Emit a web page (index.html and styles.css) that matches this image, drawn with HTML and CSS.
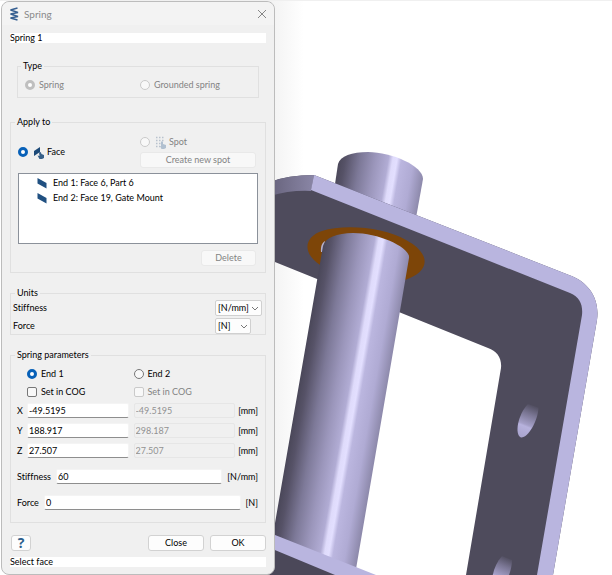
FILE: index.html
```html
<!DOCTYPE html>
<html lang="en">
<head>
<meta charset="utf-8">
<title>Spring</title>
<link rel="stylesheet" href="styles.css">
</head>
<body>
<main class="workspace">
  <svg class="scene" viewBox="0 0 612 575" preserveAspectRatio="xMinYMin slice" aria-hidden="true">
    <defs>
      <linearGradient id="steel" gradientUnits="userSpaceOnUse" x1="366" y1="0" x2="451" y2="14.7">
        <stop offset="0" stop-color="#4b485a"/>
        <stop offset=".08" stop-color="#565267"/>
        <stop offset=".25" stop-color="#7d7998"/>
        <stop offset=".42" stop-color="#9b96bb"/>
        <stop offset=".57" stop-color="#b1acd4"/>
        <stop offset=".62" stop-color="#dfdbfb"/>
        <stop offset=".67" stop-color="#e3dfff"/>
        <stop offset=".72" stop-color="#bbb6df"/>
        <stop offset=".86" stop-color="#b0abd4"/>
        <stop offset="1" stop-color="#8e8aac"/>
      </linearGradient>
      <linearGradient id="bevel"><stop offset="0" stop-color="#67637c"/><stop offset="1" stop-color="#8a86a6"/></linearGradient>
      <linearGradient id="bore" x1=".6" y1="0" x2=".35" y2="1">
        <stop offset="0" stop-color="#504d5f"/><stop offset=".3" stop-color="#7b7795"/><stop offset=".62" stop-color="#a49fc7"/><stop offset=".68" stop-color="#b7b2dd"/><stop offset="1" stop-color="#aaa5cf"/>
      </linearGradient>
      <linearGradient id="shade"><stop offset="0" stop-color="#f2f2f2"/><stop offset="1" stop-color="#ffffff"/></linearGradient>
    </defs>
    <rect width="612" height="575" fill="#fff"/>
    <rect x="270" width="34" height="575" fill="url(#shade)"/>
    <rect width="612" height="1" fill="#f0f0f0"/>
    <path d="M335 184 338 164C340 156 352 152 368 152 392 152 423 166 423 179L416 218Z" fill="url(#steel)"/>
    <path d="M270 182Q288 175 314 175L569 275C589 282 600 299 597 320L553 575H466L501 368C502 358 497 351 488 348L270 260Z" fill="#4e4b5c"/>
    <path d="M270 182Q288 175 314 175L311 191Q290 190 270 196Z" fill="url(#bevel)"/>
    <path d="M314 175 569 275C589 282 600 299 597 320L553 575H537L582 315C583 305 580 297 570 293L311 190Z" fill="#b9b5df"/>
    <path d="M528 404 538.500 407.500C538 421 528 438 521 437.500 514 435 518 414 528 404Z" fill="url(#bore)"/>
    <path d="M502 556 512 560C512 573 504 589 496 589 489 587 492 567 502 556Z" fill="url(#bore)"/>
    <path d="M320 265C302 253 304 237 322 231 344 224 384 227 406 240 432 254 430 272 405 280Z" fill="#7d4508"/>
    <path d="M321 252C320.500 246 322 243 325 241L323 252Z" fill="#b5b1cf"/>
    <path d="M266 575 323 246C325 238 337 233 353 233 380 233 411 248 409 258L355 575Z" fill="url(#steel)"/>
    <path d="M270 533 376 575H270Z" fill="#b9b5df"/>
    <path d="M270 548 335 575H270Z" fill="#4b4859"/>
  </svg>

  <form class="dialog" aria-label="Spring">
    <header class="titlebar">
      <svg class="logo" viewBox="0 0 10 14"><path d="M8.500 1 1.500 3 9 5.500 1.500 7 9 9.500 1.500 11 8.500 13" fill="none" stroke="#365f91" stroke-width="1.500" stroke-linejoin="bevel"/></svg>
      <h1>Spring</h1>
      <button type="button" class="close" aria-label="Close window"><svg viewBox="0 0 10 10"><path d="M1 1 9 9M9 1 1 9" stroke="#868686" fill="none"/></svg></button>
    </header>

    <input class="strip name" aria-label="Name" value="Spring 1">

    <fieldset class="type">
      <legend>Type</legend>
      <label class="off"><input type="radio" name="type" checked disabled>Spring</label>
      <label class="off"><input type="radio" name="type" disabled>Grounded spring</label>
    </fieldset>

    <fieldset class="apply">
      <legend>Apply to</legend>
      <div class="targets">
        <label><input type="radio" name="target" checked>
          <svg class="pick" viewBox="0 0 12 13"><path d="M1 5 7 1V6L1 10Z" fill="#1d4a78"/><path d="M6 6.500Q8 5 8.500 8L11 9V12L9 13H6.500L4.500 9.500 6.500 10Z" fill="#365f88"/></svg>Face</label>
        <div class="spot">
          <label class="off"><input type="radio" name="target" disabled>
            <svg class="pick" viewBox="0 0 12 13"><path d="M1 1.500H9M1 4.500H9M1 7.500H6M1 10.500H5" stroke="#b9c2cd" stroke-width="1.500" stroke-dasharray="1.500 1.500"/><path d="M6 5.500H8V8L11 9V12L9 13H6.500L5 10H6Z" fill="#b1c0d0"/></svg>Spot</label>
          <button type="button" disabled>Create new spot</button>
        </div>
      </div>
      <ul class="list">
        <li><svg viewBox="0 0 10 12"><path d="M.5 1 9.500 6V11.500L.5 6.500Z" fill="#205081"/></svg>End 1: Face 6, Part 6</li>
        <li><svg viewBox="0 0 10 12"><path d="M.5 1 9.500 6V11.500L.5 6.500Z" fill="#205081"/></svg>End 2: Face 19, Gate Mount</li>
      </ul>
      <button type="button" class="delete" disabled>Delete</button>
    </fieldset>

    <fieldset class="units">
      <legend>Units</legend>
      <label for="us">Stiffness</label>
      <select id="us"><option>[N/mm]</option></select>
      <label for="uf">Force</label>
      <select id="uf" class="short"><option>[N]</option></select>
    </fieldset>

    <fieldset class="params">
      <legend>Spring parameters</legend>
      <div class="ends">
        <label class="first"><input type="radio" name="end" checked>End 1</label>
        <label><input type="radio" name="end">End 2</label>
        <label class="first"><input type="checkbox">Set in COG</label>
        <label class="off"><input type="checkbox" disabled>Set in COG</label>
      </div>
      <div class="coords">
        <label for="x">X</label><input id="x" value="-49.5195"><input aria-label="X, end 2" value="-49.5195" disabled><span>[mm]</span>
        <label for="y">Y</label><input id="y" value="188.917"><input aria-label="Y, end 2" value="298.187" disabled><span>[mm]</span>
        <label for="z">Z</label><input id="z" value="27.507"><input aria-label="Z, end 2" value="27.507" disabled><span>[mm]</span>
      </div>
      <div class="line"><label for="st">Stiffness</label><input id="st" value="60"><span>[N/mm]</span></div>
      <div class="line"><label for="fo">Force</label><input id="fo" value="0"><span>[N]</span></div>
    </fieldset>

    <footer class="actions">
      <button type="button" class="help">?</button>
      <button type="button">Close</button>
      <button type="submit">OK</button>
    </footer>
    <output class="strip status">Select face</output>
  </form>
</main>
</body>
</html>
```
FILE: styles.css
```css
* { box-sizing: border-box; }

body {
  margin: 0;
  background: #fff;
  color: #000;
  font: 9px/12px Lato, "Open Sans", sans-serif;
  font-variant-ligatures: none;
}

.workspace {
  display: grid;
  min-height: 100vh;
  overflow: hidden;
}

.scene, .dialog { grid-area: 1 / 1; }
.scene { width: 100%; height: 100%; display: block; }

.dialog {
  position: relative;
  display: flex;
  flex-direction: column;
  width: 274px;
  margin: 1px 0 0 1px;
  padding: 0 8px;
  background: #f0f0f0;
  border: 1px solid #bcbcbc;
  border-radius: 8px;
}

button, input, select { font: inherit; color: inherit; margin: 0; }

.titlebar {
  display: flex;
  align-items: center;
  height: 23px;
  margin: 0 -8px;
  padding: 0 6px 0 7px;
  background: #f3f3f3;
  border-radius: 8px 8px 0 0;
}
.titlebar h1 {
  flex: 1;
  margin: 0 0 0 5px;
  color: #8a8a8a;
  font-size: 10px;
  font-weight: 400;
}
.logo { width: 10px; height: 14px; }
.close { border: 0; padding: 0; background: none; width: 12px; height: 12px; }
.close svg { display: block; width: 10px; height: 10px; margin: 1px; }

.strip {
  display: block;
  width: 100%;
  height: 10px;
  padding: 0;
  border: 0;
  background: #fff;
  line-height: 10px;
}
.name { margin-top: 8px; }
.status { margin-top: 6px; }

fieldset {
  margin: 14px 0 0;
  padding: 0;
  min-width: 0;
  border: 1px solid #e0e0e0;
}
legend { padding: 0 2px; height: 12px; }

label { display: flex; align-items: center; }
.off { color: #838383; }

input[type="radio"], input[type="checkbox"] {
  appearance: none;
  flex: none;
  width: 10px;
  height: 10px;
  margin-right: 4px;
  border: 1px solid #777;
  border-radius: 50%;
  background: #f8f8f8;
}
input[type="checkbox"] { border-radius: 2px; }
input[type="radio"]:checked { border: 3px solid #0861b8; background: #fff; }
input:disabled[type="radio"], input:disabled[type="checkbox"] { border-color: #cacaca; }
input[type="radio"]:checked:disabled { border-color: #bfbfbf; }

.type {
  display: grid;
  grid-template-columns: 115px 1fr;
  margin: 17px 7px 4px;
  padding: 6px 7px 5px;
}
.type legend { margin-left: -4px; }
.type label { height: 14px; }

.apply { padding: 8px 7px 6px; }
.apply legend { margin-left: -3px; }
.targets { display: grid; grid-template-columns: 122px 1fr; align-items: center; }
.targets label { height: 12px; }
.spot { display: grid; gap: 4px; margin-right: 2px; }
.pick { width: 12px; height: 13px; margin: 0 1px; }
.targets .pick { margin-right: 2px; }

button {
  height: 16px;
  padding: 0;
  border: 1px solid #d2d2d2;
  border-radius: 3px;
  background: #fdfdfd;
}
button:disabled { background: #f8f8f8; border-color: #e9e9e9; color: #838383; }

.list {
  height: 71px;
  margin: 5px 0 6px;
  padding: 1px 18px;
  list-style: none;
  background: #fff;
  border: 1px solid #8b919a;
}
.list li { display: flex; align-items: center; height: 15px; }
.list svg { width: 10px; height: 12px; margin-right: 6px; }
.delete { display: block; width: 55px; margin: 0 2px 0 auto; }

.units {
  display: grid;
  grid-template-columns: 1fr 47px;
  gap: 2px;
  padding: 1px 3px 0 2px;
}
.units legend { margin-left: 2px; }

select {
  appearance: none;
  width: 100%;
  height: 16px;
  padding: 0 2px;
  border: 1px solid #d0d0d0;
  border-radius: 2px;
  background: #fdfdfd url("data:image/svg+xml,%3Csvg xmlns='http://www.w3.org/2000/svg' viewBox='0 0 8 5'%3E%3Cpath d='M1 1l3 3 3-3' fill='none' stroke='%23777'/%3E%3C/svg%3E") right 2px center / 8px 5px no-repeat;
}
.short { width: 36px; }

.params { padding: 6px 7px 12px 6px; }
.params legend { margin-left: -2px; }
.ends, .coords {
  display: grid;
  grid-template-columns: 10px 1fr 5px 1fr 23px;
  align-items: center;
}
.ends { row-gap: 4px; }
.ends label { height: 14px; grid-column: 4 / 6; }
.ends .first { grid-column: 2; }
.coords { row-gap: 5px; margin-top: 4px; }
.coords input:disabled { grid-column: 4; }
.coords span { text-align: right; }

.coords input, .line input {
  min-width: 0;
  width: 100%;
  height: 15px;
  padding: 0 1px;
  border: 1px solid #f4f4f4;
  border-bottom-color: #8e8e8e;
  border-radius: 2px;
  background: #fff;
}
.coords input:disabled { background: #f0f0f0; border-color: #e6e6e6; color: #929292; }
.line { display: flex; align-items: center; gap: 5px; margin-top: 11px; }
.line input { flex: 1; }

.actions { display: flex; gap: 6px; margin-top: 12px; }
.actions button { width: 56px; }
.actions .help {
  width: 20px;
  margin: 0 auto 0 1px;
  color: #2d5f8c;
  font: 700 14px/14px "Open Sans", sans-serif;
}
```
